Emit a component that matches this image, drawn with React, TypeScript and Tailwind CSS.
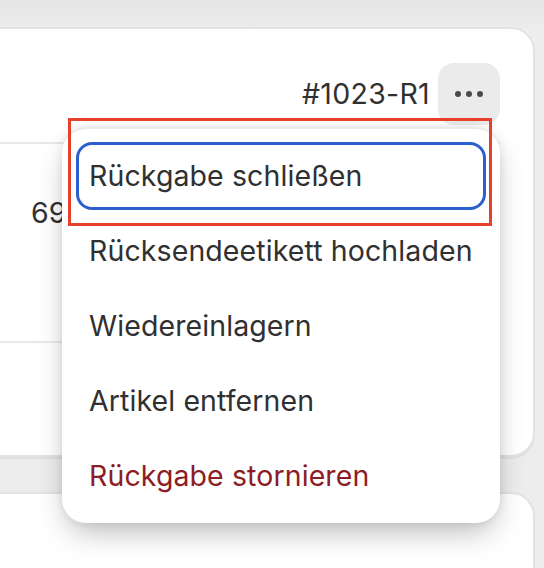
import React from "react";

const items = [
  "Rücksendeetikett hochladen",
  "Wiedereinlagern",
  "Artikel entfernen",
];

export default function App() {
  return (
    <div
      className="relative w-[544px] h-[568px] overflow-hidden bg-[#ededed]"
      style={{ fontFamily: "Inter, 'Noto Sans', sans-serif" }}
    >
      <div className="h-[27px] bg-gradient-to-b from-[#e5e5e5] to-[#ececec]" />

      {/* Card 1 */}
      <div className="ml-[-40px] w-[575px] h-[430px] rounded-t-[24px] rounded-b-[24px] border-2 border-[#e3e3e3] bg-white shadow-[0_2px_0_rgba(0,0,0,0.05)] pt-[34px] pr-[33px] flex flex-col">
        <div className="flex items-center justify-end gap-[8px] h-[62px]">
          <span className="text-[28.5px] text-[#303030] leading-none tracking-[0.3px]">#1023-R1</span>
          <div className="w-[62px] h-[62px] rounded-[16px] bg-[#ebebeb] flex items-center justify-center gap-[5px]">
            <span className="w-[6px] h-[6px] rounded-full bg-[#4a4a4a]" />
            <span className="w-[6px] h-[6px] rounded-full bg-[#4a4a4a]" />
            <span className="w-[6px] h-[6px] rounded-full bg-[#4a4a4a]" />
          </div>
        </div>
        <div className="mt-[17px] border-t-2 border-[#e8e8e8] h-[199px] pl-[69px] pt-[55px]">
          <span className="text-[28.5px] text-[#303030] leading-none">69,00 €</span>
        </div>
        <div className="border-t-2 border-[#e8e8e8]" />
      </div>

      {/* Card 2 */}
      <div className="mt-[35px] ml-[-40px] w-[575px] h-[120px] rounded-t-[24px] border-2 border-[#e3e3e3] bg-white" />

      {/* Popover menu */}
      <div className="absolute left-[62px] top-[127px] w-[438px] h-[396px] rounded-[24px] bg-white shadow-[0_14px_30px_-6px_rgba(0,0,0,0.28),0_0_10px_rgba(0,0,0,0.08),inset_0_2px_0_rgba(220,220,220,0.6)] pt-[15px] px-[14px] flex flex-col gap-[7px]">
        <div className="h-[68px] rounded-[16px] border-[3px] border-[#2b5fd0] pl-[10px] flex items-center">
          <span className="text-[28.5px] text-[#303030] leading-none tracking-[0.1px]">Rückgabe schließen</span>
        </div>
        {items.map((t) => (
          <div key={t} className="h-[68px] rounded-[16px] pl-[13px] flex items-center">
            <span className="text-[28.5px] text-[#303030] leading-none tracking-[0.1px]">{t}</span>
          </div>
        ))}
        <div className="h-[68px] rounded-[16px] pl-[13px] flex items-center">
          <span className="text-[28.5px] text-[#8c1d26] leading-none tracking-[0.1px]">Rückgabe stornieren</span>
        </div>
      </div>

      {/* Annotation box */}
      <div className="absolute left-[68px] top-[118px] w-[424px] h-[108px] border-[3px] border-[#e8412a]" />
    </div>
  );
}
